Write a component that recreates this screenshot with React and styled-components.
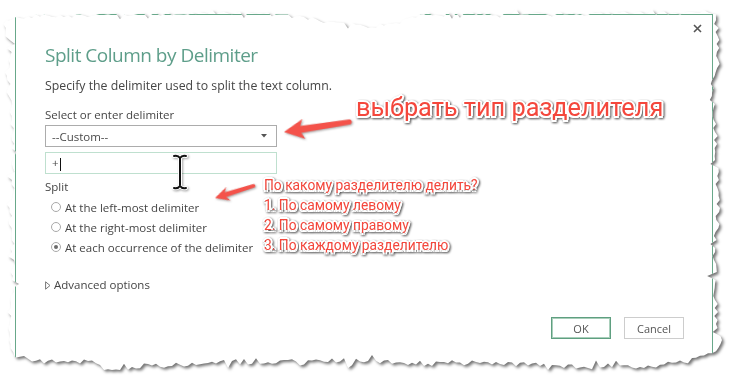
import * as React from "react";
import styled, { createGlobalStyle } from "styled-components";

const GlobalStyle = createGlobalStyle`
  html, body {
    margin: 0;
    padding: 0;
    background: #ffffff;
  }
`;

const UI_FONT = `"Open Sans", "Noto Sans", sans-serif`;
const NOTE_FONT = `Roboto, "Noto Sans", sans-serif`;
const RED = "#f4473c";

// deterministic jitter so the torn edge is the same every run
const makeRand = (seed) => {
  let s = seed;
  return () => {
    s = (s * 16807) % 2147483647;
    return (s - 1) / 2147483646;
  };
};

const interp = (ctrl, t) => {
  for (let i = 0; i < ctrl.length - 1; i++) {
    const [a, av] = ctrl[i];
    const [b, bv] = ctrl[i + 1];
    const lo = Math.min(a, b);
    const hi = Math.max(a, b);
    if (t >= lo && t <= hi) {
      const k = b === a ? 0 : (t - a) / (b - a);
      return av + (bv - av) * k;
    }
  }
  return ctrl[ctrl.length - 1][1];
};

const tornPolygon = () => {
  const rand = makeRand(9);
  const jit = (amp) => {
    let v = (rand() - 0.5) * amp;
    if (rand() > 0.85) v += (rand() - 0.5) * amp * 2.4;
    return v;
  };
  const pts = [];
  const top = [[4, 20], [40, 16], [120, 15], [250, 13], [300, 17], [340, 24], [372, 27], [405, 19], [430, 14], [700, 13], [716, 14]];
  const right = [[14, 716], [60, 718], [85, 713], [150, 716], [210, 718], [260, 714], [320, 716], [345, 722], [352, 716]];
  const bottom = [[716, 350], [695, 360], [650, 366], [560, 366], [480, 362], [420, 364], [340, 360], [240, 363], [140, 366], [110, 371], [90, 362], [40, 361], [12, 356]];
  const left = [[356, 13], [320, 8], [280, 13], [210, 11], [150, 14], [95, 10], [50, 9], [20, 5]];
  for (let x = 4; x <= 716; x += 4) pts.push([x, interp(top, x) + jit(4)]);
  for (let y = 16; y <= 350; y += 4) pts.push([interp(right, y) + jit(5), y]);
  for (let x = 716; x >= 12; x -= 4) pts.push([x, interp(bottom, x) + jit(5)]);
  for (let y = 356; y >= 20; y -= 4) pts.push([interp(left, y) + jit(5), y]);
  return `polygon(${pts.map(([x, y]) => `${x.toFixed(1)}px ${y.toFixed(1)}px`).join(", ")})`;
};

const Page = styled.div`
  position: relative;
  width: 729px;
  height: 380px;
  overflow: hidden;
  background: #ffffff;
`;

const ShadowWrap = styled.div`
  filter: drop-shadow(2px 2px 1.5px rgba(0, 0, 0, 0.55));
`;

const Sheet = styled.div`
  width: 729px;
  height: 380px;
  background: #ffffff;
  overflow: hidden;
`;

const Frame = styled.div`
  box-sizing: border-box;
  margin: 14px 0 0 15px;
  width: 698px;
  height: 357px;
  border: 1px solid #68a88a;
  display: flex;
  flex-direction: column;
  font-family: ${UI_FONT};
  color: #454545;
`;

const TopBar = styled.div`
  display: flex;
  justify-content: flex-end;
  padding: 9px 10px 0 0;
  height: 8px;
`;

const Body = styled.div`
  display: flex;
  flex-direction: column;
  align-items: flex-start;
  padding: 0 28px 0 29px;
`;

const Title = styled.h1`
  margin: 10px 0 0;
  font-size: 19px;
  font-weight: 400;
  line-height: 26px;
  letter-spacing: -0.5px;
  color: #5e9e8a;
`;

const Text = styled.div`
  margin-top: ${(p) => p.$top}px;
  font-size: ${(p) => p.$size || 11.5}px;
  line-height: 16px;
  color: #454545;
`;

const Field = styled.div`
  box-sizing: border-box;
  margin-top: ${(p) => p.$top}px;
  width: 232px;
  height: 22px;
  border: 1px solid ${(p) => (p.$focus ? "#bfe0cf" : "#acacac")};
  display: flex;
  align-items: center;
  justify-content: space-between;
  padding: 0 9px 0 6px;
  font-size: 11.5px;
  color: #4a4a4a;
`;

const Caret = styled.span`
  display: inline-block;
  width: 1px;
  height: 13px;
  background: #111;
  margin-left: 1px;
  vertical-align: middle;
`;

const RadioList = styled.div`
  margin-top: 2px;
  display: flex;
  flex-direction: column;
`;

const RadioRow = styled.div`
  display: flex;
  align-items: center;
  height: 20px;
  padding-left: 6px;
  gap: 4px;
  font-size: 11.5px;
  color: #454545;
`;

const RadioDot = styled.span`
  box-sizing: border-box;
  width: 10px;
  height: 10px;
  border-radius: 50%;
  border: 1px solid #a8a8a8;
  display: flex;
  align-items: center;
  justify-content: center;

  &::after {
    content: "";
    width: 4px;
    height: 4px;
    border-radius: 50%;
    background: ${(p) => (p.$on ? "#6b6b6b" : "transparent")};
  }
`;

const Expander = styled.div`
  margin-top: 20px;
  display: flex;
  align-items: center;
  gap: 3px;
  font-size: 11.5px;
  line-height: 16px;
  color: #454545;
`;

const Buttons = styled.div`
  margin-top: 24px;
  display: flex;
  justify-content: flex-end;
  gap: 13px;
  padding-right: 28px;
`;

const Button = styled.button`
  box-sizing: border-box;
  width: 60px;
  height: 22px;
  padding: 0;
  background: #ffffff;
  border: 1px solid ${(p) => (p.$primary ? "#5f9f80" : "#cdcdcd")};
  box-shadow: ${(p) => (p.$primary ? "inset 0 0 0 1px #a9cfbb" : "none")};
  font-family: ${UI_FONT};
  font-size: 11px;
  color: #555;
`;

const Overlay = styled.div`
  position: absolute;
  inset: 0;
  pointer-events: none;
`;

const Note = styled.div`
  position: absolute;
  left: ${(p) => p.$x}px;
  top: ${(p) => p.$y}px;
  font-family: ${NOTE_FONT};
  font-size: ${(p) => p.$size}px;
  line-height: ${(p) => p.$lh}px;
  color: ${RED};
  white-space: nowrap;
  text-shadow:
    2px 0 0 #fff, -2px 0 0 #fff, 0 2px 0 #fff, 0 -2px 0 #fff,
    1.5px 1.5px 0 #fff, -1.5px -1.5px 0 #fff, 1.5px -1.5px 0 #fff, -1.5px 1.5px 0 #fff;
  filter: drop-shadow(1px 1.5px 1px rgba(0, 0, 0, 0.7));
`;

const ArrowSvg = styled.svg`
  position: absolute;
  left: 0;
  top: 0;
  overflow: visible;
  filter: drop-shadow(1px 1px 1px rgba(0, 0, 0, 0.35));
`;

const Arrow = ({ x, y, angle, len, head, half, shaft }) => (
  <ArrowSvg width="1" height="1">
    <g transform={`translate(${x} ${y}) rotate(${angle})`}>
      <path
        d={`M0 0 L${head} ${-half} L${head - 3} ${-shaft} L${len} ${-shaft * 0.7}
            Q${len + shaft} 0 ${len} ${shaft * 0.7} L${head - 3} ${shaft} L${head} ${half} Z`}
        fill="#f4524a"
      />
    </g>
  </ArrowSvg>
);

const IBeam = () => (
  <ArrowSvg width="1" height="1">
    <g fill="none" strokeLinecap="round">
      <path
        d="M174 156 Q178 155 180 158 Q182 155 186 156 M180 158 V185 M174 188 Q178 189 180 186 Q182 189 186 188"
        stroke="#fff"
        strokeWidth="4"
      />
      <path
        d="M174 156 Q178 155 180 158 Q182 155 186 156 M180 158 V185 M174 188 Q178 189 180 186 Q182 189 186 188"
        stroke="#111"
        strokeWidth="2"
      />
    </g>
  </ArrowSvg>
);

const CloseIcon = () => (
  <svg width="9" height="9" viewBox="0 0 9 9">
    <path d="M1 1 L8 8 M8 1 L1 8" stroke="#555" strokeWidth="1.6" />
  </svg>
);

const DropArrow = () => (
  <svg width="6" height="4" viewBox="0 0 6 4">
    <path d="M0 0 H6 L3 3.5 Z" fill="#555" />
  </svg>
);

const ExpandArrow = () => (
  <svg width="6" height="9" viewBox="0 0 6 9">
    <path d="M0.6 0.8 L5 4.5 L0.6 8.2 Z" fill="none" stroke="#777" strokeWidth="1" />
  </svg>
);

const options = [
  { label: "At the left-most delimiter", on: false },
  { label: "At the right-most delimiter", on: false },
  { label: "At each occurrence of the delimiter", on: true },
];

const notes = [
  "По какому разделителю делить?",
  "1. По самому левому",
  "2. По самому правому",
  "3. По каждому разделителю",
];

export default function App() {
  const clip = React.useMemo(() => tornPolygon(), []);
  return (
    <Page>
      <GlobalStyle />
      <ShadowWrap>
        <Sheet style={{ clipPath: clip }}>
          <Frame>
            <TopBar>
              <CloseIcon />
            </TopBar>
            <Body>
              <Title>Split Column by Delimiter</Title>
              <Text $top={10} $size={12.3}>
                Specify the delimiter used to split the text column.
              </Text>
              <Text $top={13}>Select or enter delimiter</Text>
              <Field $top={2}>
                <span>--Custom--</span>
                <DropArrow />
              </Field>
              <Field $top={5} $focus>
                <span>
                  +<Caret />
                </span>
              </Field>
              <Text $top={5}>Split</Text>
              <RadioList>
                {options.map((o) => (
                  <RadioRow key={o.label}>
                    <RadioDot $on={o.on} />
                    {o.label}
                  </RadioRow>
                ))}
              </RadioList>
              <Expander>
                <ExpandArrow />
                Advanced options
              </Expander>
            </Body>
            <Buttons>
              <Button $primary>OK</Button>
              <Button>Cancel</Button>
            </Buttons>
          </Frame>
        </Sheet>
      </ShadowWrap>
      <Overlay>
        <IBeam />
        <Arrow x={284} y={132} angle={-8.7} len={67} head={20} half={10} shaft={3.4} />
        <Arrow x={215} y={198} angle={-17.5} len={41} head={14} half={7} shaft={2.6} />
        <Note $x={356} $y={94} $size={25.3} $lh={28}>
          выбрать тип разделителя
        </Note>
        <Note $x={264} $y={175} $size={13.8} $lh={20}>
          {notes.map((n) => (
            <div key={n}>{n}</div>
          ))}
        </Note>
      </Overlay>
    </Page>
  );
}
